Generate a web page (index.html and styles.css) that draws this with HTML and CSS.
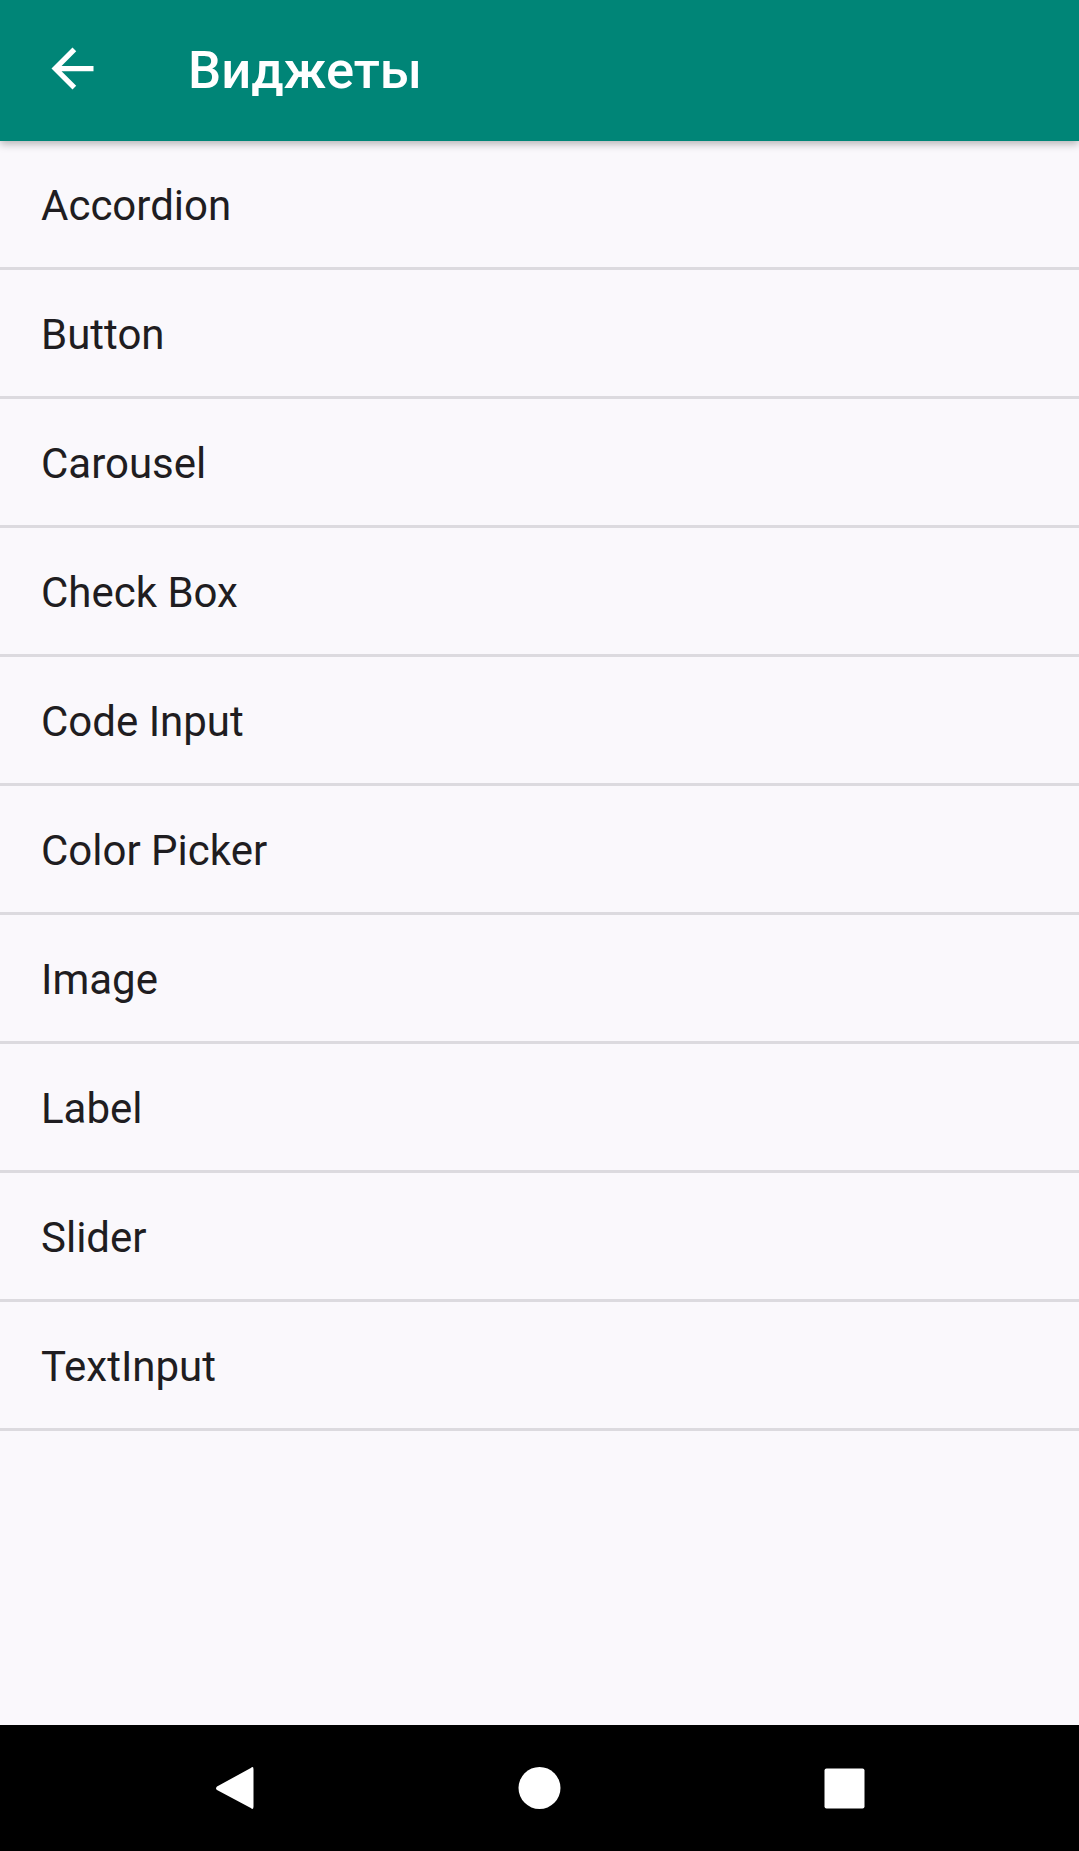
FILE: index.html
```html
<!DOCTYPE html>
<html lang="ru">
<head>
<meta charset="utf-8">
<title>Виджеты</title>
<link rel="stylesheet" href="styles.css">
</head>
<body>
<div class="screen">
  <header class="appbar">
    <svg class="back" viewBox="0 0 24 24" aria-hidden="true"><path d="M20 11H7.83l5.59-5.59L12 4l-8 8 8 8 1.41-1.41L7.83 13H20v-2z" fill="#fff"/></svg>
    <h1 class="title">Виджеты</h1>
  </header>
  <ul class="list">
    <li class="item">Accordion</li>
    <li class="item">Button</li>
    <li class="item">Carousel</li>
    <li class="item">Check Box</li>
    <li class="item">Code Input</li>
    <li class="item">Color Picker</li>
    <li class="item">Image</li>
    <li class="item">Label</li>
    <li class="item">Slider</li>
    <li class="item">TextInput</li>
  </ul>
  <nav class="navbar">
    <svg class="nav-icon" viewBox="0 0 63 63" aria-hidden="true"><path d="M47.8 11 Q50.5 8.5 50.5 12.5 L50.5 49.5 Q50.5 53.5 47.8 51 L14 33 Q12 31.5 14 29.5 Z" fill="#fff"/></svg>
    <svg class="nav-icon" viewBox="0 0 63 63" aria-hidden="true"><circle cx="31.5" cy="31" r="21" fill="#fff"/></svg>
    <svg class="nav-icon" viewBox="0 0 63 63" aria-hidden="true"><rect x="11.5" y="11.5" width="40" height="40" rx="2" fill="#fff"/></svg>
  </nav>
</div>
</body>
</html>
```
FILE: styles.css
```css
html, body {
  margin: 0;
  padding: 0;
}
body {
  background: #faf8fc;
  font-family: Roboto, "Noto Sans", "Liberation Sans", sans-serif;
}
.screen {
  display: flex;
  flex-direction: column;
  height: 1851px;
}
.appbar {
  position: relative;
  z-index: 2;
  flex: 0 0 141px;
  height: 141px;
  box-sizing: border-box;
  padding: 0 0 0 41px;
  display: flex;
  align-items: center;
  background: #008577;
  box-shadow: 0 3px 8px rgba(0, 0, 0, 0.28);
}
.back {
  width: 63px;
  height: 63px;
  flex: 0 0 63px;
  margin-bottom: 4px;
}
.title {
  margin: 0 0 0 84px;
  color: #fff;
  font-size: 52.5px;
  font-weight: 500;
  line-height: 1;
}
.list {
  list-style: none;
  margin: 0;
  padding: 0;
  flex: 1 1 auto;
}
.item {
  height: 126px;
  box-sizing: border-box;
  padding: 4px 0 0 41px;
  display: flex;
  align-items: center;
  border-bottom: 3px solid #dcdadf;
  color: #1f1d21;
  font-size: 42px;
  line-height: 1;
}
.list .item {
  height: 129px;
}
.navbar {
  flex: 0 0 126px;
  background: #000;
  display: flex;
  align-items: center;
  justify-content: center;
  gap: 242px;
}
.nav-icon {
  width: 63px;
  height: 63px;
  flex: 0 0 63px;
}
```
